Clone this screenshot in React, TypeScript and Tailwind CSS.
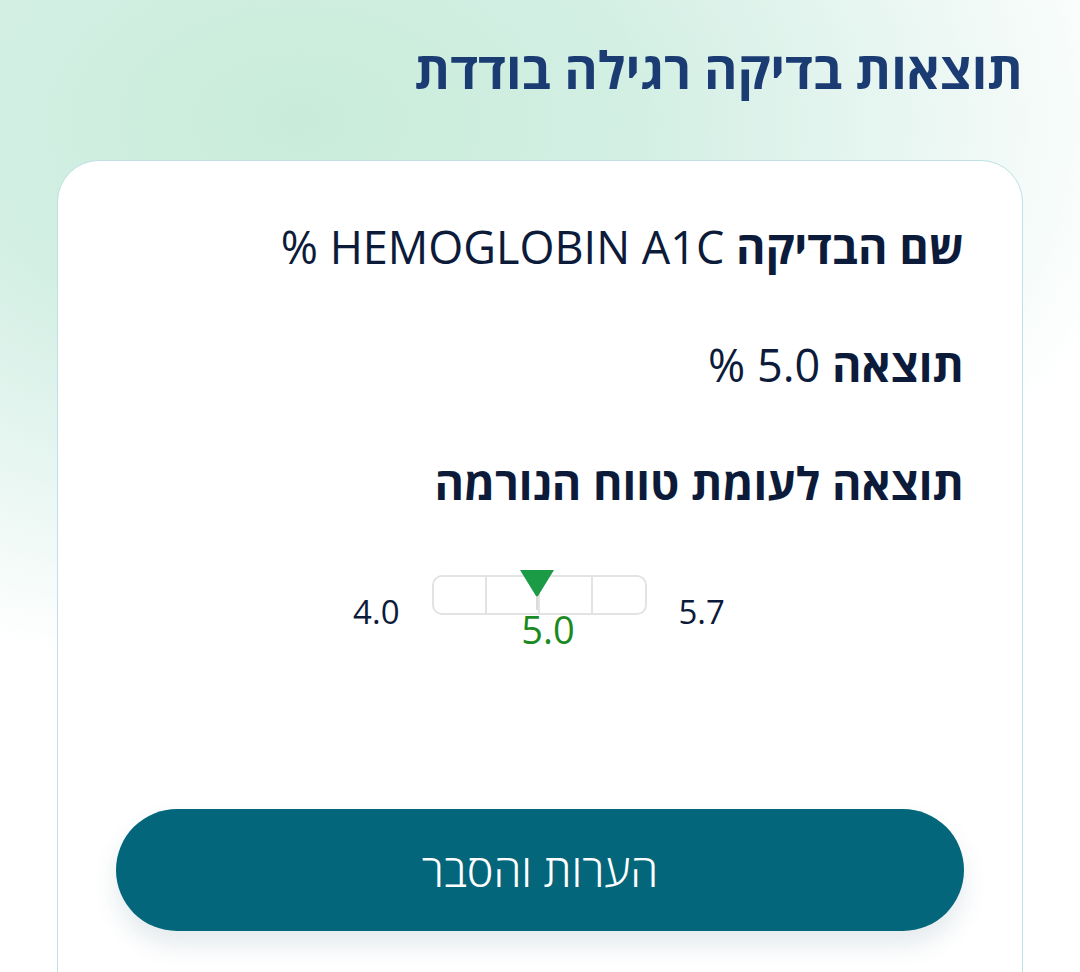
import React from "react";

export default function App() {
  return (
    <div
      dir="rtl"
      className="relative w-[1080px] h-[972px] overflow-hidden bg-white"
      style={{ fontFamily: '"Open Sans", "Noto Sans", "DejaVu Sans", sans-serif' }}
    >
      <div className="absolute inset-0 bg-[radial-gradient(ellipse_860px_560px_at_300px_120px,#c9ecd9_0%,#d3efe4_40%,#e8f6f1_70%,#ffffff_100%)]" />
      <div className="relative flex flex-col pt-[34px] pl-[57px] pr-[57px]">
        <h1 className="text-[51px] leading-[70px] font-bold text-[#1b3c73]">
          תוצאות בדיקה רגילה בודדת
        </h1>
        <div className="mt-[56px] bg-white border-[1.5px] border-[#bfe0e4] rounded-[42px] h-[900px] px-[58px] pt-[58px]">
          <div className="text-[#0d1b3a] text-[45px] leading-[56px]">
            <p>
              <span className="font-bold">שם הבדיקה</span> HEMOGLOBIN A1C %
            </p>
            <p className="mt-[62px]">
              <span className="font-bold">תוצאה</span> 5.0 %
            </p>
            <p className="mt-[62px] font-bold">תוצאה לעומת טווח הנורמה</p>
          </div>

          <div dir="ltr" className="mt-[58px] flex items-start justify-center gap-[32px] pr-[2px]">
            <span className="text-[33px] leading-[40px] mt-[23px] text-[#0d1b3a]">4.0</span>
            <div className="relative w-[215px]">
              <div className="flex h-[40px] border-2 border-[#e3e3e3] rounded-[10px] mt-[6px]">
                <div className="flex-1 border-r-2 border-[#e3e3e3]" />
                <div className="flex-1 border-r-2 border-[#e3e3e3]" />
                <div className="flex-1 border-r-2 border-[#e3e3e3]" />
                <div className="flex-1" />
              </div>
              <svg
                className="absolute left-[87px] top-[1px]"
                width="36"
                height="42"
                viewBox="0 0 36 42"
              >
                <path d="M1 0 H35 L19 26 Q18 28 17 26 Z" fill="#1c9b46" />
                <line x1="18" y1="26" x2="18" y2="40" stroke="#cfcfcf" strokeWidth="1.5" />
              </svg>
              <div className="flex justify-center">
                <span className="text-[38px] leading-[44px] -mt-[8px] ml-[18px] text-[#1a8a1f]">5.0</span>
              </div>
            </div>
            <span className="text-[33px] leading-[40px] mt-[23px] text-[#0d1b3a]">5.7</span>
          </div>

          <button className="mt-[158px] w-full h-[122px] rounded-full bg-[#03667b] text-white text-[45px] font-light shadow-[0_14px_24px_rgba(30,80,110,0.12)]">
            הערות והסבר
          </button>
        </div>
      </div>
    </div>
  );
}
